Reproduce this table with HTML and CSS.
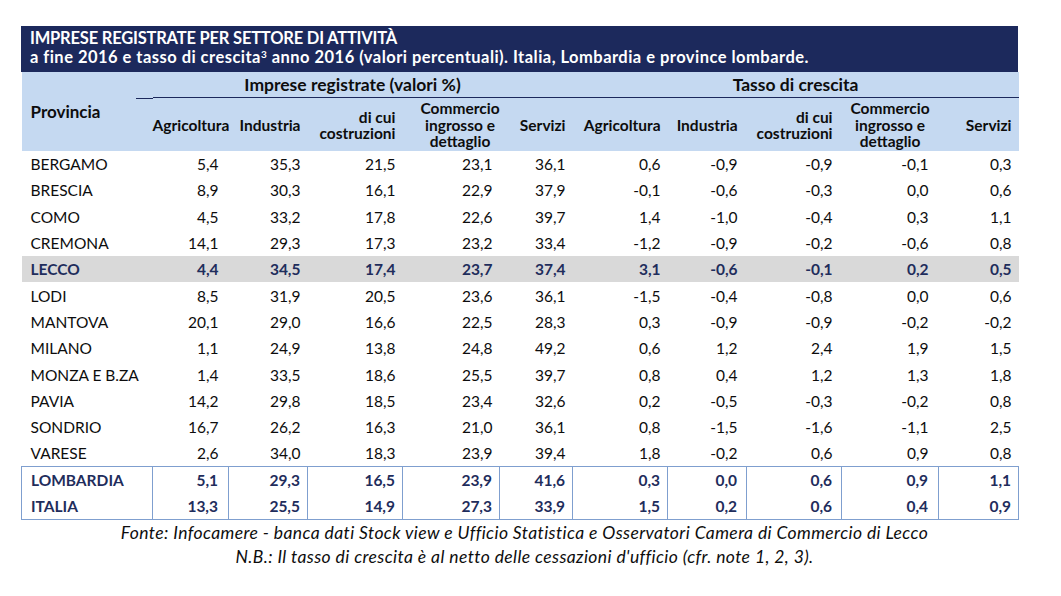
FILE: index.html
```html
<!DOCTYPE html>
<html lang="it">
<head>
<meta charset="utf-8">
<title>Imprese registrate per settore di attività</title>
<link rel="stylesheet" href="styles.css">
</head>
<body>
<div class="sheet">
  <div class="title">
    <div class="t1">IMPRESE REGISTRATE PER SETTORE DI ATTIVITÀ</div>
    <div class="t2">a fine 2016 e tasso di crescita<sup>3</sup> anno 2016 (valori percentuali). Italia, Lombardia e province lombarde.</div>
  </div>
  <table class="data">
    <colgroup>
      <col class="c-prov"><col class="c1"><col class="c2"><col class="c3"><col class="c4"><col class="c5">
      <col class="c6"><col class="c7"><col class="c8"><col class="c9"><col class="c10">
    </colgroup>
    <thead>
      <tr class="grp">
        <th rowspan="2" class="prov">Provincia</th>
        <th colspan="5" class="group first">Imprese registrate (valori %)</th>
        <th colspan="5" class="group">Tasso di crescita</th>
      </tr>
      <tr class="sub">
        <th>Agricoltura</th>
        <th>Industria</th>
        <th>di cui<br>costruzioni</th>
        <th class="ctr shift">Commercio<br>ingrosso e<br>dettaglio</th>
        <th>Servizi</th>
        <th>Agricoltura</th>
        <th>Industria</th>
        <th>di cui<br>costruzioni</th>
        <th class="ctr">Commercio<br>ingrosso e<br>dettaglio</th>
        <th>Servizi</th>
      </tr>
    </thead>
    <tbody class="rows">
      <tr><td>BERGAMO</td><td>5,4</td><td>35,3</td><td>21,5</td><td>23,1</td><td>36,1</td><td>0,6</td><td>-0,9</td><td>-0,9</td><td>-0,1</td><td>0,3</td></tr>
      <tr><td>BRESCIA</td><td>8,9</td><td>30,3</td><td>16,1</td><td>22,9</td><td>37,9</td><td>-0,1</td><td>-0,6</td><td>-0,3</td><td>0,0</td><td>0,6</td></tr>
      <tr><td>COMO</td><td>4,5</td><td>33,2</td><td>17,8</td><td>22,6</td><td>39,7</td><td>1,4</td><td>-1,0</td><td>-0,4</td><td>0,3</td><td>1,1</td></tr>
      <tr><td>CREMONA</td><td>14,1</td><td>29,3</td><td>17,3</td><td>23,2</td><td>33,4</td><td>-1,2</td><td>-0,9</td><td>-0,2</td><td>-0,6</td><td>0,8</td></tr>
      <tr class="hl"><td>LECCO</td><td>4,4</td><td>34,5</td><td>17,4</td><td>23,7</td><td>37,4</td><td>3,1</td><td>-0,6</td><td>-0,1</td><td>0,2</td><td>0,5</td></tr>
      <tr><td>LODI</td><td>8,5</td><td>31,9</td><td>20,5</td><td>23,6</td><td>36,1</td><td>-1,5</td><td>-0,4</td><td>-0,8</td><td>0,0</td><td>0,6</td></tr>
      <tr><td>MANTOVA</td><td>20,1</td><td>29,0</td><td>16,6</td><td>22,5</td><td>28,3</td><td>0,3</td><td>-0,9</td><td>-0,9</td><td>-0,2</td><td>-0,2</td></tr>
      <tr><td>MILANO</td><td>1,1</td><td>24,9</td><td>13,8</td><td>24,8</td><td>49,2</td><td>0,6</td><td>1,2</td><td>2,4</td><td>1,9</td><td>1,5</td></tr>
      <tr><td>MONZA E B.ZA</td><td>1,4</td><td>33,5</td><td>18,6</td><td>25,5</td><td>39,7</td><td>0,8</td><td>0,4</td><td>1,2</td><td>1,3</td><td>1,8</td></tr>
      <tr><td>PAVIA</td><td>14,2</td><td>29,8</td><td>18,5</td><td>23,4</td><td>32,6</td><td>0,2</td><td>-0,5</td><td>-0,3</td><td>-0,2</td><td>0,8</td></tr>
      <tr><td>SONDRIO</td><td>16,7</td><td>26,2</td><td>16,3</td><td>21,0</td><td>36,1</td><td>0,8</td><td>-1,5</td><td>-1,6</td><td>-1,1</td><td>2,5</td></tr>
      <tr><td>VARESE</td><td>2,6</td><td>34,0</td><td>18,3</td><td>23,9</td><td>39,4</td><td>1,8</td><td>-0,2</td><td>0,6</td><td>0,9</td><td>0,8</td></tr>
    </tbody>
    <tbody class="totals">
      <tr><td>LOMBARDIA</td><td>5,1</td><td>29,3</td><td>16,5</td><td>23,9</td><td>41,6</td><td>0,3</td><td>0,0</td><td>0,6</td><td>0,9</td><td>1,1</td></tr>
      <tr><td>ITALIA</td><td>13,3</td><td>25,5</td><td>14,9</td><td>27,3</td><td>33,9</td><td>1,5</td><td>0,2</td><td>0,6</td><td>0,4</td><td>0,9</td></tr>
    </tbody>
  </table>
  <div class="notes">
    <p>Fonte: Infocamere - banca dati Stock view e Ufficio Statistica e Osservatori Camera di Commercio di Lecco</p>
    <p>N.B.: Il tasso di crescita è al netto delle cessazioni d'ufficio (cfr. note 1, 2, 3).</p>
  </div>
</div>
</body>
</html>
```

FILE: styles.css
```css
html, body {
  margin: 0;
  padding: 0;
  background: #ffffff;
}
body {
  font-family: Lato, "Open Sans", "Liberation Sans", sans-serif;
  color: #0d0d0d;
}
.sheet {
  width: 997px;
  margin: 26px 0 0 21px;
}
.title {
  background: #1c295c;
  color: #ffffff;
  font-weight: 700;
  font-size: 16.5px;
  line-height: 19.8px;
  padding: 2.5px 0 3px 9px;
  height: 40.5px;
}
.title .t1 {
  letter-spacing: -0.2px;
}
.title .t2 {
  letter-spacing: 0.47px;
}
.title sup {
  font-size: 10px;
  line-height: 0;
  vertical-align: 5px;
}
.data {
  width: 997px;
  border-collapse: collapse;
  table-layout: fixed;
  font-size: 15.5px;
}
.c-prov { width: 131px; }
.c1 { width: 76px; }
.c2 { width: 79px; }
.c3 { width: 95px; }
.c4 { width: 97px; }
.c5 { width: 73px; }
.c6 { width: 95px; }
.c7 { width: 79px; }
.c8 { width: 95px; }
.c9 { width: 97px; }
.c10 { width: 80px; }

thead th {
  background: #c5d9f1;
  font-weight: 700;
  color: #0d0d0d;
  padding: 0 7px 0 0;
}
thead .grp th {
  height: 25px;
  font-size: 17.5px;
  line-height: 18px;
  text-align: center;
  padding: 0;
  vertical-align: middle;
}
thead .grp th.group {
  border-bottom: 1.5px solid #1c295c;
}
thead .grp th.first {
  position: relative;
  padding-right: 20px;
}
thead .grp th.first::before {
  content: "";
  position: absolute;
  left: -17px;
  bottom: -1.5px;
  width: 17px;
  border-bottom: 1.5px solid #1c295c;
}
thead th.prov {
  text-align: left;
  padding-left: 9px;
  font-size: 17px;
}
thead .sub th {
  height: 52px;
  font-size: 15.5px;
  line-height: 16.5px;
  text-align: right;
  vertical-align: middle;
  padding-top: 1px;
}
thead .sub th.ctr {
  text-align: center;
  padding-right: 0;
}
thead .sub th.shift {
  padding-left: 18px;
}

tbody td {
  text-align: right;
  padding: 0 7px 0 0;
  white-space: nowrap;
}
tbody td:first-child {
  text-align: left;
  padding-left: 9px;
}
thead .sub th:nth-child(1),
tbody td:nth-child(2) {
  padding-right: 10px;
}
thead .sub th:nth-child(7),
thead .sub th:nth-child(8),
tbody td:nth-child(8),
tbody td:nth-child(9) {
  padding-right: 9px;
}
tbody td:nth-child(10) {
  padding-right: 10px;
}
.rows tr {
  height: 26.3px;
}
.rows td {
  vertical-align: middle;
}
.rows tr.hl td {
  background: #d9d9d9;
  color: #1f2d5c;
  font-weight: 700;
}
.totals tr {
  height: 26.5px;
}
.totals td {
  color: #1f2d5c;
  font-weight: 700;
  border-left: 1px solid #7f9fcf;
  border-right: 1px solid #7f9fcf;
}
.totals tr:first-child td {
  border-top: 1px solid #7f9fcf;
}
.totals tr:last-child td {
  border-bottom: 1px solid #7f9fcf;
}
.notes {
  text-align: center;
  font-style: italic;
  font-size: 17.5px;
  letter-spacing: 0.4px;
  line-height: 24px;
  padding-top: 1px;
  padding-left: 10px;
}
.notes p {
  margin: 0;
}
```
